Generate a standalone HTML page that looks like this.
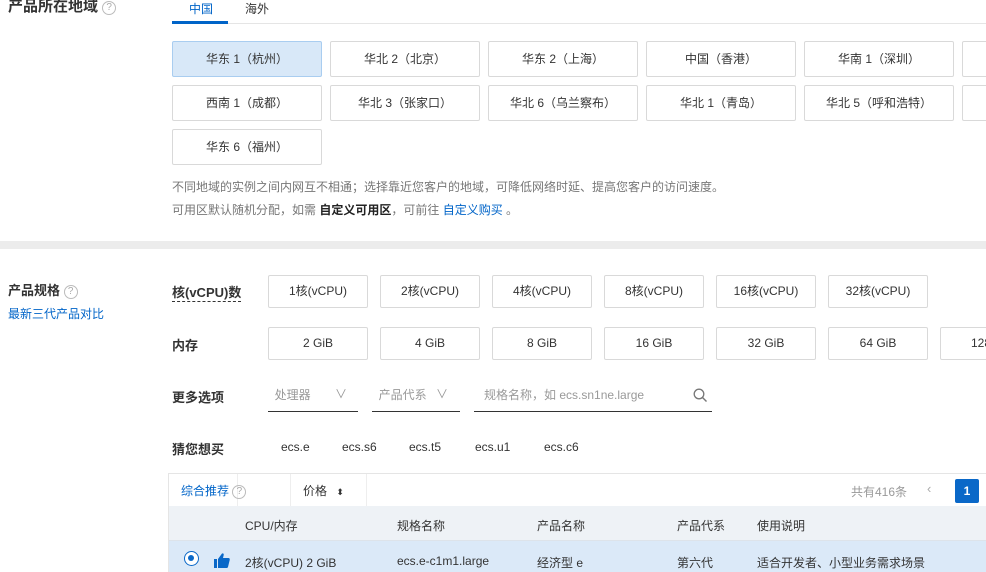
<!DOCTYPE html>
<html><head><meta charset="utf-8"><style>
*{margin:0;padding:0;box-sizing:border-box}
body{width:986px;height:572px;overflow:hidden;background:#fff;font-family:"Liberation Sans","Noto Sans CJK SC",sans-serif;color:#333;position:relative;font-size:12px}
.a{position:absolute;white-space:nowrap}
.btn{position:absolute;border:1px solid #d9d9d9;border-radius:2px;background:#fff;text-align:center;font-size:12px;color:#333}
.r{width:150px;height:36px;line-height:34px}
.c{width:100px;height:33px;line-height:31px}
.q{display:inline-block;width:14px;height:14px;border:1px solid #bbb;border-radius:50%;font-size:10px;line-height:12px;text-align:center;color:#aaa;font-weight:normal;vertical-align:1px}
.lbl{font-size:13px;font-weight:bold;color:#333}
</style></head><body>
<div class="a" style="left:8px;top:-5px;font-size:15px;font-weight:bold">产品所在地域 <span class="q">?</span></div>
<div class="a" style="left:189px;top:0;font-size:12px;color:#0064c8">中国</div>
<div class="a" style="left:245px;top:0;font-size:12px;color:#333">海外</div>
<div class="a" style="left:172px;top:23px;width:814px;height:1px;background:#e5e5e5"></div>
<div class="a" style="left:172px;top:21px;width:56px;height:3px;background:#0064c8"></div>

<div class="btn r" style="left:172px;top:41px;background:#d8e8f8;border-color:#a9cdf0">华东 1（杭州）</div>
<div class="btn r" style="left:330px;top:41px">华北 2（北京）</div>
<div class="btn r" style="left:488px;top:41px">华东 2（上海）</div>
<div class="btn r" style="left:646px;top:41px">中国（香港）</div>
<div class="btn r" style="left:804px;top:41px">华南 1（深圳）</div>
<div class="btn r" style="left:962px;top:41px"></div>
<div class="btn r" style="left:172px;top:85px">西南 1（成都）</div>
<div class="btn r" style="left:330px;top:85px">华北 3（张家口）</div>
<div class="btn r" style="left:488px;top:85px">华北 6（乌兰察布）</div>
<div class="btn r" style="left:646px;top:85px">华北 1（青岛）</div>
<div class="btn r" style="left:804px;top:85px">华北 5（呼和浩特）</div>
<div class="btn r" style="left:962px;top:85px"></div>
<div class="btn r" style="left:172px;top:129px">华东 6（福州）</div>

<div class="a" style="left:172px;top:178px;color:#777">不同地域的实例之间内网互不相通；选择靠近您客户的地域，可降低网络时延、提高您客户的访问速度。</div>
<div class="a" style="left:172px;top:201px;color:#777">可用区默认随机分配，如需 <b style="color:#222">自定义可用区</b>，可前往 <span style="color:#0064c8">自定义购买</span> 。</div>

<div class="a" style="left:0;top:241px;width:986px;height:8px;background:#ececec"></div>

<div class="a lbl" style="left:8px;top:280px;font-size:13px">产品规格 <span class="q">?</span></div>
<div class="a" style="left:8px;top:305px;color:#0064c8">最新三代产品对比</div>

<div class="a lbl" style="left:172px;top:284px;border-bottom:1px dashed #333;line-height:17px">核(vCPU)数</div>
<div class="btn c" style="left:268px;top:275px">1核(vCPU)</div>
<div class="btn c" style="left:380px;top:275px">2核(vCPU)</div>
<div class="btn c" style="left:492px;top:275px">4核(vCPU)</div>
<div class="btn c" style="left:604px;top:275px">8核(vCPU)</div>
<div class="btn c" style="left:716px;top:275px">16核(vCPU)</div>
<div class="btn c" style="left:828px;top:275px">32核(vCPU)</div>

<div class="a lbl" style="left:172px;top:335px">内存</div>
<div class="btn c" style="left:268px;top:327px">2 GiB</div>
<div class="btn c" style="left:380px;top:327px">4 GiB</div>
<div class="btn c" style="left:492px;top:327px">8 GiB</div>
<div class="btn c" style="left:604px;top:327px">16 GiB</div>
<div class="btn c" style="left:716px;top:327px">32 GiB</div>
<div class="btn c" style="left:828px;top:327px">64 GiB</div>
<div class="btn c" style="left:940px;top:327px;text-align:left;padding-left:30px">128 GiB</div>

<div class="a lbl" style="left:172px;top:387px">更多选项</div>
<div class="a" style="left:268px;top:386px;width:90px;height:26px;border-bottom:1px solid #333;color:#999">&nbsp;&nbsp;处理器<span style="position:absolute;left:67px;top:-1px">∨</span></div>
<div class="a" style="left:372px;top:386px;width:88px;height:26px;border-bottom:1px solid #333;color:#999">&nbsp;&nbsp;产品代系<span style="position:absolute;left:64px;top:-1px">∨</span></div>
<div class="a" style="left:474px;top:386px;width:238px;height:26px;border-bottom:1px solid #333;color:#999">&nbsp;&nbsp;&nbsp;规格名称，如 ecs.sn1ne.large
<svg style="position:absolute;left:219px;top:2px" width="15" height="15" viewBox="0 0 15 15"><circle cx="6" cy="6" r="4.8" fill="none" stroke="#777" stroke-width="1.3"/><path d="M9.5 9.5L13.5 13.5" stroke="#777" stroke-width="1.4"/></svg></div>

<div class="a lbl" style="left:172px;top:439px">猜您想买</div>
<div class="a" style="left:281px;top:440px">ecs.e</div>
<div class="a" style="left:342px;top:440px">ecs.s6</div>
<div class="a" style="left:409px;top:440px">ecs.t5</div>
<div class="a" style="left:475px;top:440px">ecs.u1</div>
<div class="a" style="left:544px;top:440px">ecs.c6</div>

<div class="a" style="left:168px;top:473px;width:818px;height:1px;background:#e5e5e5"></div>
<div class="a" style="left:168px;top:473px;width:1px;height:99px;background:#e5e5e5"></div>
<div class="a" style="left:237px;top:474px;width:1px;height:32px;background:#eee"></div>
<div class="a" style="left:290px;top:474px;width:1px;height:32px;background:#eee"></div>
<div class="a" style="left:366px;top:474px;width:1px;height:32px;background:#eee"></div>
<div class="a" style="left:181px;top:482px;color:#0064c8">综合推荐 <span class="q">?</span></div>
<div class="a" style="left:250px;top:482px;display:none"></div>
<div class="a" style="left:303px;top:482px">价格 <span style="font-size:9px;margin-left:6px">⬍</span></div>
<div class="a" style="left:851px;top:483px;color:#999">共有416条</div>
<div class="a" style="left:927px;top:481px;color:#aaa;font-size:13px">‹</div>
<div class="a" style="left:955px;top:479px;width:24px;height:24px;background:#0a68c8;color:#fff;text-align:center;line-height:24px;font-weight:bold;border-radius:2px">1</div>

<div class="a" style="left:169px;top:506px;width:817px;height:35px;background:#eef2f6;border-bottom:1px solid #dde3ea"></div>
<div class="a" style="left:245px;top:517px">CPU/内存</div>
<div class="a" style="left:397px;top:517px">规格名称</div>
<div class="a" style="left:537px;top:517px">产品名称</div>
<div class="a" style="left:677px;top:517px">产品代系</div>
<div class="a" style="left:757px;top:517px">使用说明</div>

<div class="a" style="left:169px;top:541px;width:817px;height:31px;background:#dbe9f8"></div>
<div class="a" style="left:184px;top:551px;width:15px;height:15px;border:1.5px solid #0a68c8;border-radius:50%;background:#fff"><div style="position:absolute;left:3px;top:3px;width:6px;height:6px;border-radius:50%;background:#0a68c8"></div></div>
<svg class="a" style="left:214px;top:552px" width="16" height="16" viewBox="0 0 16 16"><rect x="0" y="7" width="3" height="9" fill="#0a68c8"/><path d="M4 7L8 1.5C9 1 10 1.5 9.7 3L9 6H14.5C15.5 6 16 7 15.7 8L14 15C13.8 15.6 13.3 16 12.7 16H4Z" fill="#0a68c8"/></svg>
<div class="a" style="left:245px;top:554px">2核(vCPU) 2 GiB</div>
<div class="a" style="left:397px;top:554px">ecs.e-c1m1.large</div>
<div class="a" style="left:537px;top:554px">经济型 e</div>
<div class="a" style="left:677px;top:554px">第六代</div>
<div class="a" style="left:757px;top:554px">适合开发者、小型业务需求场景</div>
</body></html>
